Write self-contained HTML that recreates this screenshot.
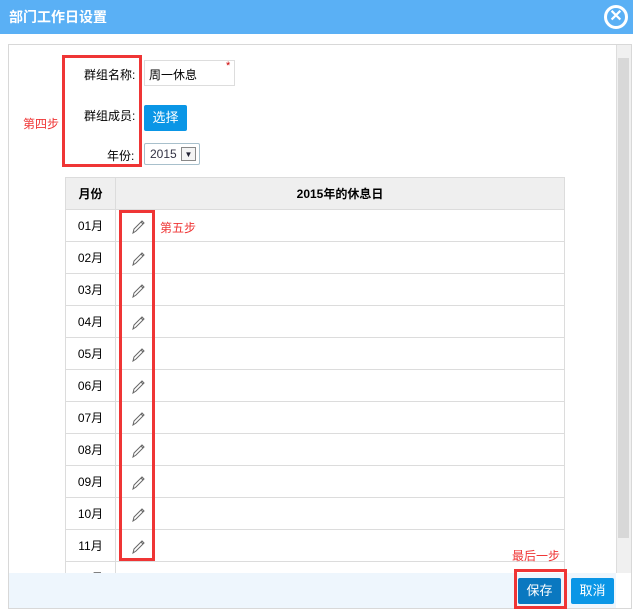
<!DOCTYPE html>
<html><head><meta charset="utf-8"><style>
*{margin:0;padding:0;box-sizing:border-box}
body{width:633px;height:610px;background:#fff;font-family:"Liberation Sans","Noto Sans CJK SC",sans-serif;font-size:12px;color:#000;position:relative;overflow:hidden}
.hd{position:absolute;left:0;top:0;width:633px;height:34px;background:#5ab0f5;color:#fff;font-weight:bold;font-size:14px;line-height:34px;padding-left:9px}
.close{position:absolute;right:5px;top:5px;width:24px;height:24px;border:3px solid #fff;border-radius:50%;color:#fff;font-size:16px;line-height:17px;text-align:center;font-weight:bold}
.box{position:absolute;left:8px;top:44px;width:624px;height:565px;border:1px solid #d8d8d8;overflow:hidden}
.abs{position:absolute}
.red{position:absolute;border:3px solid #ef3535}
.rt{position:absolute;color:#ef3535;font-size:12px}
table{position:absolute;left:65px;top:177px;width:500px;border-collapse:collapse}
td,th{border:1px solid #dcdcdc;height:32px}
th{background:#efefef;font-size:12px;font-weight:bold}
td.m{width:50px;text-align:center}
.btn{position:absolute;color:#fff;text-align:center;font-size:13px;border-radius:2px}
</style></head><body>
<div class="hd">部门工作日设置<div class="close">✕</div></div>
<div class="box"></div>
<div class="abs" style="left:616px;top:45px;width:15px;height:528px;background:#f0f0f0;border-left:1px solid #ddd"></div>
<div class="abs" style="left:618px;top:58px;width:11px;height:480px;background:#d8d8d8"></div>
<div class="abs" style="left:84px;top:66px">群组名称:</div>
<div class="abs" style="left:144px;top:60px;width:91px;height:26px;border:1px solid #ddd;padding:5px 4px">周一休息</div>
<div class="abs" style="left:226px;top:60px;color:#c00;font-size:11px">*</div>
<div class="abs" style="left:84px;top:107px">群组成员:</div>
<div class="btn" style="left:144px;top:105px;width:43px;height:26px;line-height:26px;background:#0a96e6">选择</div>
<div class="abs" style="left:107px;top:147px">年份:</div>
<div class="abs" style="left:144px;top:143px;width:56px;height:22px;border:1px solid #a8c0cc;border-radius:2px;padding:3px 5px;color:#334">2015</div>
<div class="abs" style="left:181px;top:147px;width:15px;height:14px;border:1px solid #888;background:#f4f4f4;text-align:center;font-size:8px;line-height:13px;color:#223">▼</div>
<table>
<tr><th>月份</th><th>2015年的休息日</th></tr>
<tr><td class="m">01月</td><td></td></tr>
<tr><td class="m">02月</td><td></td></tr>
<tr><td class="m">03月</td><td></td></tr>
<tr><td class="m">04月</td><td></td></tr>
<tr><td class="m">05月</td><td></td></tr>
<tr><td class="m">06月</td><td></td></tr>
<tr><td class="m">07月</td><td></td></tr>
<tr><td class="m">08月</td><td></td></tr>
<tr><td class="m">09月</td><td></td></tr>
<tr><td class="m">10月</td><td></td></tr>
<tr><td class="m">11月</td><td></td></tr>
<tr><td class="m">12月</td><td></td></tr>
</table>
<div id="pens"></div>
<svg class="abs" style="left:130px;top:219px" width="16" height="340">
<g fill="none" stroke="#666" stroke-width="1">
<path id="p" d="M3 14 L4 10 L12 2 L14 4 L6 12 Z M11 3 L13 5"/>
<use href="#p" y="32"/><use href="#p" y="64"/><use href="#p" y="96"/><use href="#p" y="128"/><use href="#p" y="160"/><use href="#p" y="192"/><use href="#p" y="224"/><use href="#p" y="256"/><use href="#p" y="288"/><use href="#p" y="320"/>
</g></svg>
<div class="abs" style="left:9px;top:573px;width:607px;height:35px;background:#eef6fd"></div>
<div class="btn" style="left:518px;top:578px;width:43px;height:26px;line-height:26px;background:#0a78c0">保存</div>
<div class="btn" style="left:571px;top:578px;width:43px;height:26px;line-height:26px;background:#0a96e6">取消</div>
<div class="red" style="left:62px;top:55px;width:80px;height:112px"></div>
<div class="red" style="left:119px;top:210px;width:36px;height:351px"></div>
<div class="red" style="left:514px;top:569px;width:53px;height:40px"></div>
<div class="rt" style="left:23px;top:115px">第四步</div>
<div class="rt" style="left:160px;top:219px">第五步</div>
<div class="rt" style="left:512px;top:547px">最后一步</div>
</body></html>
